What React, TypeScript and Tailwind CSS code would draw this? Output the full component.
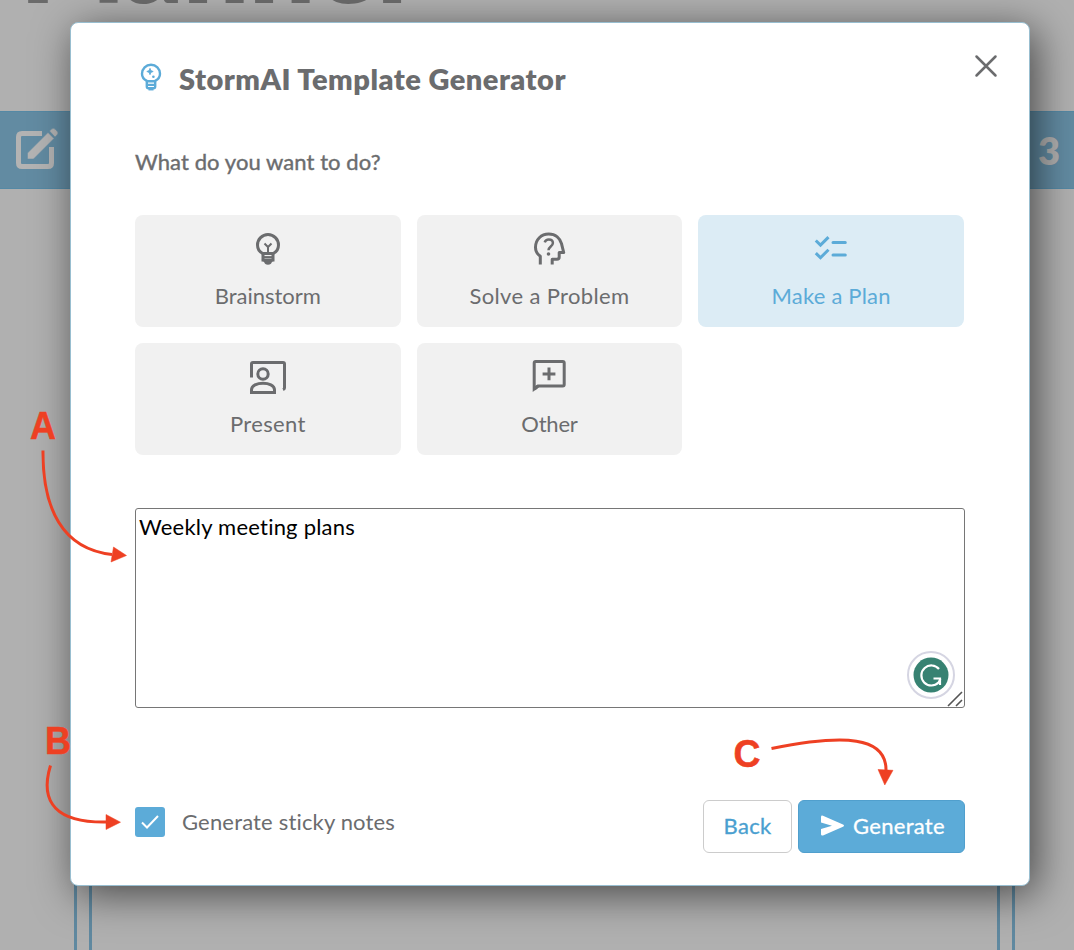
import React from "react";

function TitleBulb() {
  return (
    <svg className="-mt-[2px]" width="22" height="28" viewBox="0 0 22 28" fill="none" stroke="#5cabd8" strokeWidth="2.400">
      <path d="M7 17.800C3.800 16.400 2 13.800 2 10.700a9 9 0 0 1 18 0c0 3.100-1.800 5.700-5 7.100" />
      <path d="M6.800 17.500v6q0 1.700 1.800 1.700h4.800q1.800 0 1.800-1.700v-6M6.800 18.300h8.400M8 21.900h6" />
      <path d="M8.500 26.600h5" strokeWidth="1.700" />
      <path d="M10 5.300l.9 2.300 2.300.9-2.300.9-.9 2.300-.9-2.300-2.300-.9 2.300-.9z" fill="#5cabd8" strokeWidth=".8" />
      <circle cx="13.400" cy="13.700" r="1.300" fill="#5cabd8" stroke="none" />
    </svg>
  );
}

function BulbIcon() {
  return (
    <svg width="38" height="38" viewBox="0 0 38 38" fill="none" stroke="#6b6c6e" strokeWidth="3">
      <path d="M13.700 24.500C10.200 22.800 8.500 19.500 8.500 16.100a10.500 10.500 0 0 1 21 0c0 3.400-1.700 6.700-5.200 8.400z" />
      <path d="M14 24v7h10v-7" />
      <path d="M14.500 28.100h9" strokeWidth="2" />
      <path d="M12.800 30.500h12.400q0 1.800-2.200 2.300-.7 2.900-4 2.900t-4-2.900q-2.200-.5-2.200-2.300z" fill="#6b6c6e" stroke="none" />
      <path d="M19 24.500V18M15.500 14.500l3.500 3.500 3.500-3.500" strokeWidth="2" />
    </svg>
  );
}

function HeadIcon() {
  return (
    <svg width="38" height="38" viewBox="0 0 38 38" fill="none" stroke="#6b6c6e" strokeWidth="3">
      <path d="M10.300 35.500v-8.300C7 24.900 5.500 21.800 5.500 18.200 5.500 10.500 11.300 5 18.700 5c7 0 11.400 4.400 12.800 9.700l2.200 8.800h-4.500v4.500q0 2.300-2.300 2.300h-4.700v5.200" strokeLinejoin="round" />
      <path d="M14.700 13.300q1-2.900 4.100-2.900 4.100 0 4.100 3.600c0 3.400-4.400 3.500-4.400 7.200" strokeWidth="2.500" />
      <circle cx="18.500" cy="25" r="1.800" fill="#6b6c6e" stroke="none" />
    </svg>
  );
}

function ChecklistIcon() {
  return (
    <svg width="38" height="38" viewBox="0 0 38 38" fill="none" stroke="#5cabd8" strokeWidth="3">
      <path d="M3.800 11.500l4.700 4.600 8-8M3.800 24.100l4.700 4.600 8-8" />
      <path d="M21 13.500h12.300M21 26.100h12.300" strokeLinecap="round" />
    </svg>
  );
}

function PresentIcon() {
  return (
    <svg width="38" height="38" viewBox="0 0 38 38" fill="none" stroke="#6b6c6e" strokeWidth="3">
      <path d="M2.500 20.500V7q0-1.500 1.500-1.500h30q1.500 0 1.500 1.500v24q0 1-1.500 1.600" />
      <circle cx="14" cy="17" r="5.200" />
      <path d="M2.500 35.600v-2.800c0-8.800 23-8.800 23 0v2.800z" />
    </svg>
  );
}

function OtherIcon() {
  return (
    <svg width="38" height="38" viewBox="0 0 38 38" fill="none" stroke="#6b6c6e" strokeWidth="3">
      <path d="M4.200 32V6q0-1.500 1.500-1.500h27q1.500 0 1.500 1.500v21.500q0 1.500-1.500 1.500H8z" />
      <path d="M4.500 32l3.500-3" />
      <path d="M19 10.500v12.800M12.600 16.900h12.800" />
    </svg>
  );
}

const choices = [
  { label: "Brainstorm", icon: <BulbIcon />, track: "tracking-[0px]" },
  { label: "Solve a Problem", icon: <HeadIcon />, track: "tracking-[0.35px]" },
  { label: "Make a Plan", icon: <ChecklistIcon />, track: "tracking-[0.2px]", selected: true },
  { label: "Present", icon: <PresentIcon />, track: "tracking-[0.35px]" },
  { label: "Other", icon: <OtherIcon />, track: "tracking-[-0.2px]" },
];

function Backdrop() {
  return (
    <div className="flex h-full flex-col">
      <div className="h-[111px] shrink-0 overflow-hidden pl-[20px]">
        <div className="mt-[-111px] text-[116px] font-extrabold leading-[140px] tracking-[-0.3px] text-[#6b6b6b]">Planner</div>
      </div>
      <div className="flex h-[78px] shrink-0 items-center justify-between border-y border-[#5589a5] bg-[#628ba2] pl-[14px] pr-[14px]">
        <svg width="46" height="46" viewBox="0 0 46 46" fill="none">
          <path d="M28 6.500H8Q4.500 6.500 4.500 10v26q0 3.500 3.500 3.500h26q3.500 0 3.500-3.500V20" stroke="#b3b3b3" strokeWidth="5" />
          <path d="M13.500 26L34 5.500l6 6L19.500 32h-6zM35.500 4l2-2q2-1.500 4 .5l1.500 1.500q2 2 0 4l-2 2z" fill="#b3b3b3" stroke="#628ba2" strokeWidth=".5" />
        </svg>
        <span className="text-[38px] font-extrabold text-[#b0b0b0]">3</span>
      </div>
      <div className="ml-[74px] mr-[59px] flex-1 border-x-[3px] border-[#6089a0] px-3">
        <div className="h-full border-x-[3px] border-[#6089a0]" />
      </div>
    </div>
  );
}

function Callouts() {
  return (
    <svg className="pointer-events-none absolute inset-0" width="1074" height="950" fill="none" stroke="#ee4023" strokeWidth="3">
      <g fill="#ee4023" stroke="#ee4023" strokeWidth=".5" fontFamily="Liberation Sans, sans-serif" fontSize="39" fontWeight="700">
        <text x="30" y="439" textLength="26" lengthAdjust="spacingAndGlyphs">A</text>
        <text x="45" y="754" textLength="26" lengthAdjust="spacingAndGlyphs">B</text>
        <text x="733.5" y="767" textLength="27" lengthAdjust="spacingAndGlyphs">C</text>
        <path d="M113.500 547l13 8.500-15.500 6.500zM106 814.500l14.500 7.700-14.500 7.300zM878 769.500l15 .8-8.200 14.700z" />
      </g>
      <path d="M43 450.500C42.500 508 62 549 112 554.500" />
      <path d="M50.500 765.500C39 803 57 823 107 822" />
      <path d="M771.500 748.500C844 734 887 736 886 771" />
    </svg>
  );
}

export default function App() {
  return (
    <div className="relative h-[950px] w-[1074px] overflow-hidden bg-[#b0b0b0] font-['Lato',sans-serif] text-[#6b6c6e] [font-variant-ligatures:none]">
      <Backdrop />
      <div className="absolute left-[70px] top-[22px] flex h-[864px] w-[960px] flex-col rounded-[8px] border border-[#98bed0] bg-white px-[64px] shadow-[6px_8px_42px_rgba(0,0,0,0.6)]">
        <header className="mt-[30px] flex h-[50px] items-center pl-[5px]">
          <TitleBulb />
          <h1 className="ml-[17px] mt-[1px] whitespace-nowrap text-[29px] font-extrabold leading-none tracking-[0.48px]">StormAI Template Generator</h1>
          <button aria-label="Close" className="-mr-[34px] -mt-[24px] ml-auto">
            <svg width="26" height="26" viewBox="0 0 26 26" stroke="#6b6c6e" strokeWidth="2.500" strokeLinecap="round">
              <path d="M3.500 3.500l19 19M22.500 3.500l-19 19" />
            </svg>
          </button>
        </header>
        <h2 className="mt-[44px] h-[30px] whitespace-nowrap text-[22px] leading-[30px] tracking-[0.08px] [-webkit-text-stroke:0.4px_#6b6c6e]">What do you want to do?</h2>
        <div className="mt-[38px] grid w-[829px] shrink-0 grid-cols-3 gap-4">
          {choices.map((c) => (
            <button
              key={c.label}
              className={`flex h-[112px] flex-col items-center rounded-[8px] pt-[14px] ${c.selected ? "bg-[#dcecf5] text-[#5cabd8]" : "bg-[#f1f1f1]"}`}
            >
              {c.icon}
              <span className={`mt-[14px] whitespace-nowrap text-[22px] leading-[30px] ${c.track}`}>{c.label}</span>
            </button>
          ))}
        </div>
        <div className="relative mt-[53px] h-[200px] w-[830px] shrink-0 rounded-[3px] border border-[#767676] px-[3px] pt-[3px] text-[22px] leading-[30px] text-black">
          <span className="whitespace-nowrap tracking-[0.22px]">Weekly meeting plans</span>
          <div className="absolute bottom-[8px] right-[9px] flex size-[48px] items-center justify-center rounded-full border-2 border-[#d5d5e2] bg-white">
            <svg width="36" height="36" viewBox="0 0 36 36" fill="none">
              <circle cx="18" cy="18" r="17.500" fill="#378272" />
              <path d="M26 12A10 10 0 1 0 25.500 25.500l2-3.500M20.500 21.500h6.500v6.500" stroke="#fff" strokeWidth="2.200" />
            </svg>
          </div>
          <svg className="absolute bottom-0 right-[1px]" width="16" height="16" viewBox="0 0 16 16" stroke="#555" strokeWidth="1.600">
            <path d="M1 15L15 1M9 15l6-6" />
          </svg>
        </div>
        <footer className="mt-[92px] flex h-[53px] w-[830px] items-center">
          <label className="-mt-[9px] flex items-center">
            <span className="flex size-[30px] items-center justify-center rounded-[3px] bg-[#5cabd8]">
              <svg width="20" height="16" viewBox="0 0 20 16" fill="none" stroke="#fff" strokeWidth="2">
                <path d="M2 8.500l5 5L18 2" />
              </svg>
            </span>
            <span className="ml-[17px] whitespace-nowrap text-[22px] leading-[30px] tracking-[0.17px]">Generate sticky notes</span>
          </label>
          <button className="ml-auto h-[53px] w-[89px] rounded-[6px] border border-[#ccc] pb-[2px] text-[22px] tracking-[0.3px] text-[#4a9fd0] [-webkit-text-stroke:0.3px_#4a9fd0]">Back</button>
          <button className="ml-[6px] flex h-[53px] w-[167px] items-center rounded-[6px] border border-[#509fcd] bg-[#5cabd8] pl-[22px] text-[22px] text-white [-webkit-text-stroke:0.3px_#fff]">
            <svg className="-mt-[2px]" width="24" height="22" viewBox="0 0 24 22" fill="#fff">
              <path d="M0 2Q0 0 2 .7L22 9.500q2 1.200 0 2.300L2 20.500Q0 21 0 19.300V14l11-3.300L0 7.500z" />
            </svg>
            <span className="-mt-[2px] ml-[8px] tracking-[0.3px]">Generate</span>
          </button>
        </footer>
      </div>
      <Callouts />
    </div>
  );
}
